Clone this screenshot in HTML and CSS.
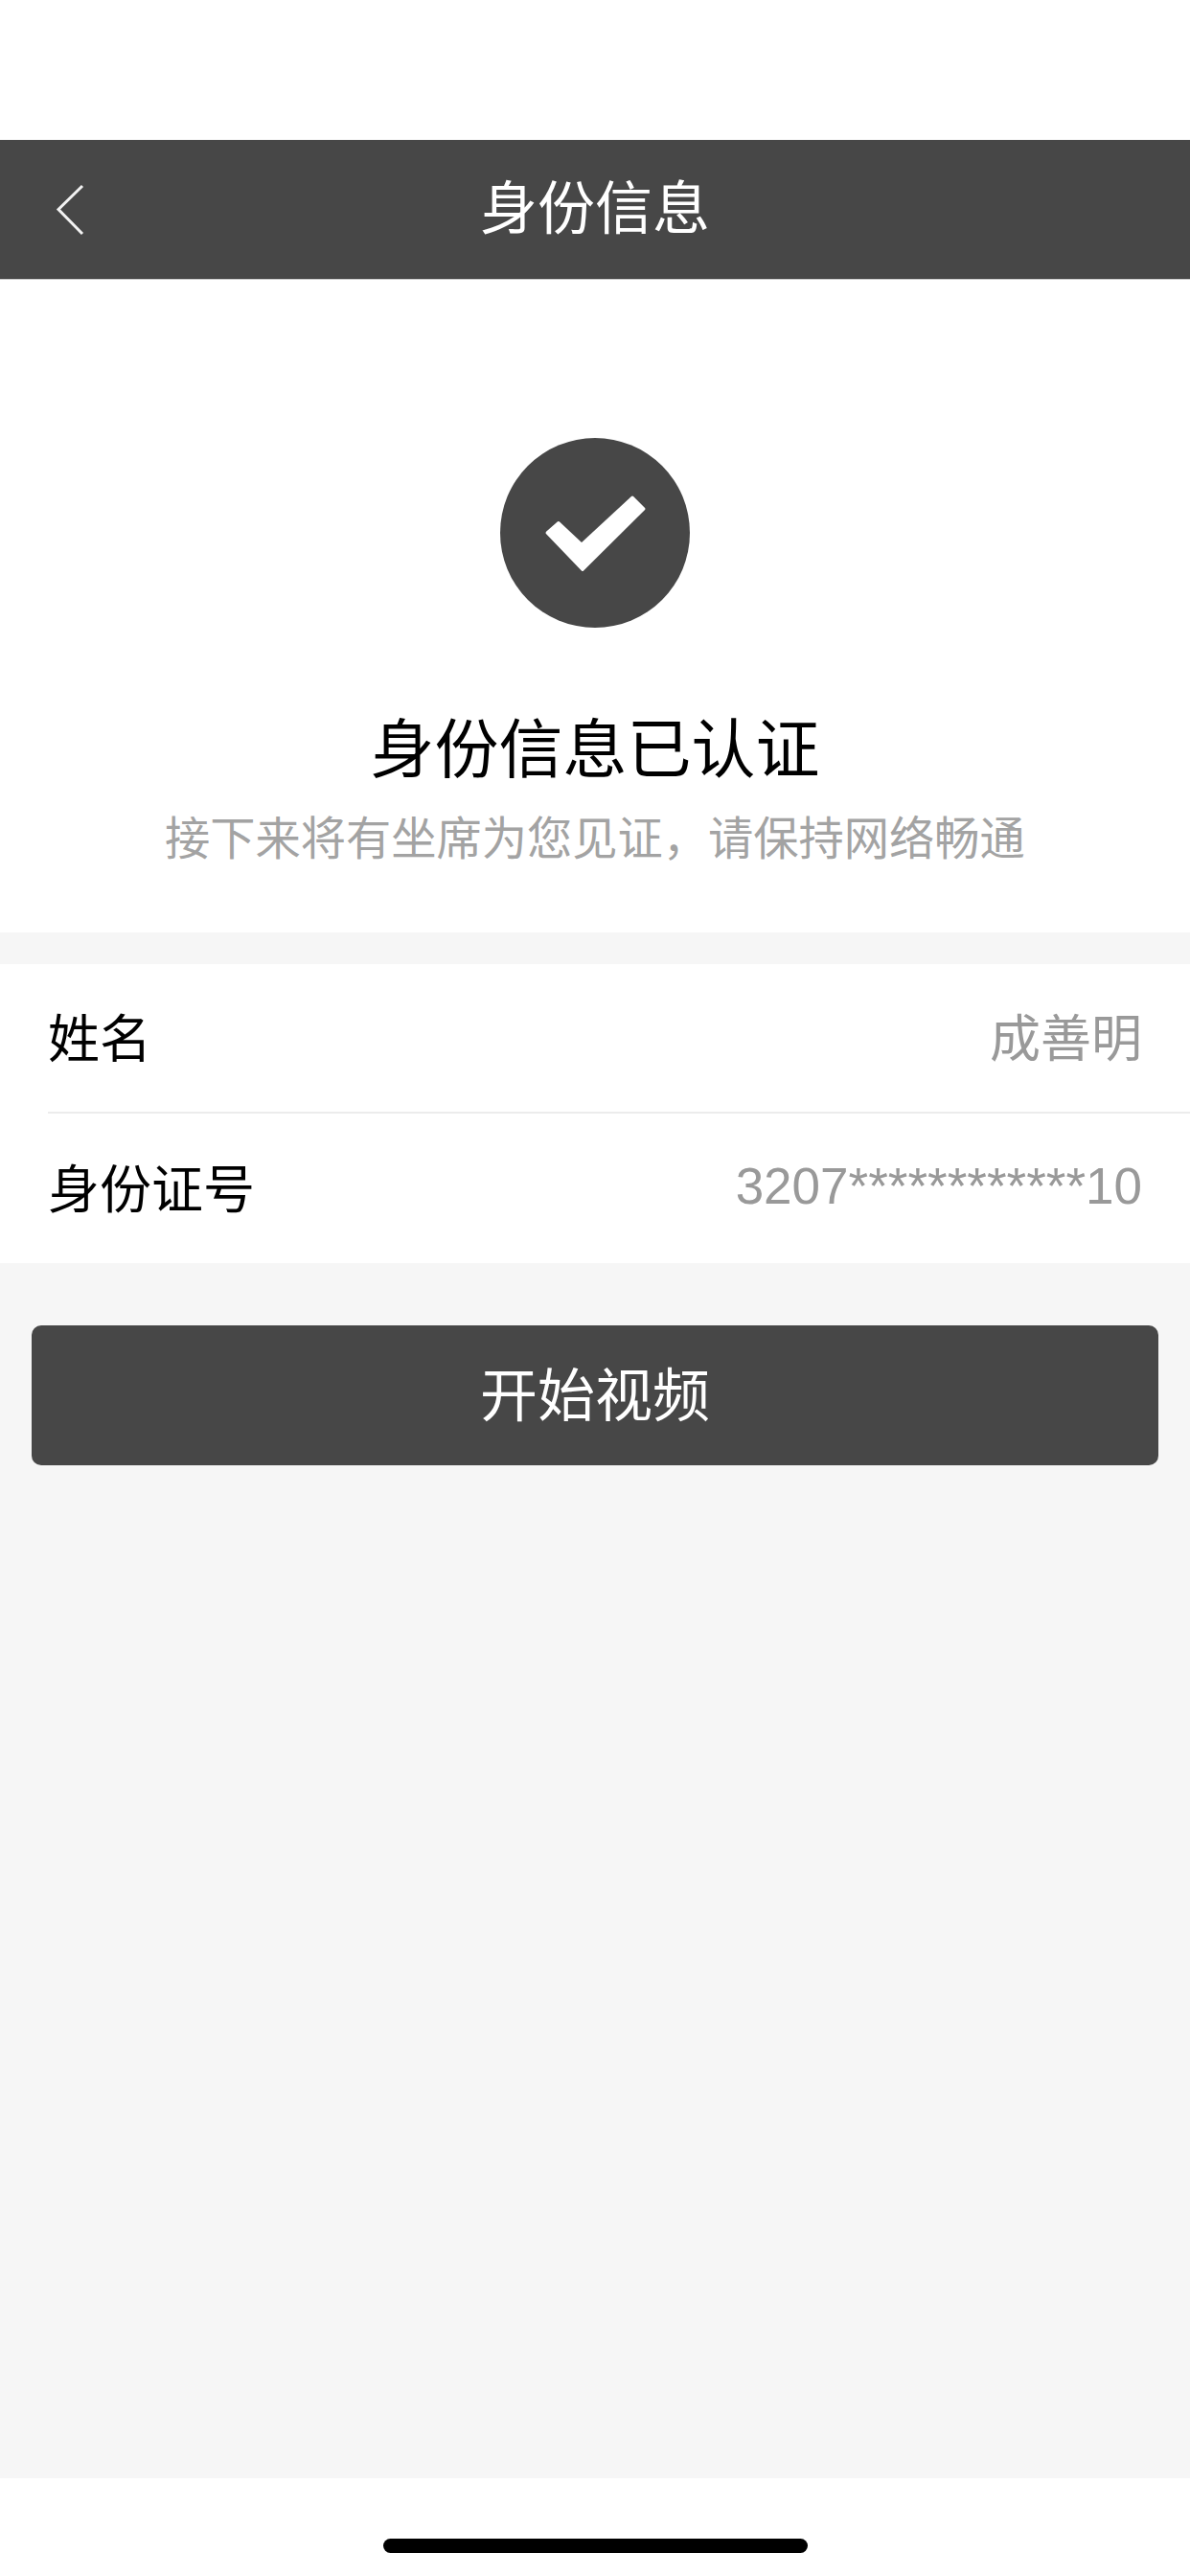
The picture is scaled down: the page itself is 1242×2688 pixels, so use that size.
FILE: index.html
```html
<!DOCTYPE html>
<html lang="zh-CN">

<head>
    <meta charset="UTF-8">
    <meta name="viewport" content="width=device-width, initial-scale=1.0">
    <title>身份信息</title>

    <link rel="stylesheet" href="styles.css">
</head>

<body>
    <div class="status-bar"></div>

    <header class="nav-bar">
        <a class="back-btn" href="#" aria-label="返回">
            <svg width="32" height="54" viewBox="0 0 32 54">
                <path d="M29 2 L4 26.5 L29 52" fill="none" stroke="#f2f2f2" stroke-width="3" />
            </svg>
        </a>
        <h1 class="nav-title">身份信息</h1>
    </header>

    <main class="content">
        <section class="result">
            <div class="result-icon">
                <svg width="198" height="198" viewBox="0 0 198 198">
                    <circle cx="99" cy="99" r="99" fill="#474747" />
                    <path d="M49 99 L61 88.5 L85 111 L138 62 L150 74 L86 137.5 Z" fill="#fff" stroke="#fff" stroke-width="3" stroke-linejoin="round" />
                </svg>
            </div>
            <h2 class="result-title">身份信息已认证</h2>
            <p class="result-desc">接下来将有坐席为您见证，请保持网络畅通</p>
        </section>

        <ul class="info-list">
            <li class="info-row">
                <span class="info-label">姓名</span>
                <span class="info-value">成善明</span>
            </li>
            <li class="info-row">
                <span class="info-label">身份证号</span>
                <span class="info-value">3207************10</span>
            </li>
        </ul>

        <button class="start-btn">开始视频</button>
    </main>

    <div class="home-bar">
        <div class="home-indicator"></div>
    </div>
</body>

</html>
```

FILE: styles.css
```css
* {
    box-sizing: border-box;
}

body {
    display: flex;
    flex-direction: column;
    width: 1242px;
    height: 2688px;
    margin: 0;
    font-family: "Liberation Sans", "Noto Sans CJK SC", sans-serif;
    color: #000;
    background: #fff;
}

.status-bar {
    height: 146px;
}

.nav-bar {
    display: grid;
    grid-template-columns: 1fr auto 1fr;
    align-items: center;
    height: 146px;
    padding-left: 57px;
    padding-right: 57px;
    background: #474747;
    border-bottom: 1px solid #ccc;
}

.back-btn {
    display: flex;
}

.nav-title {
    margin: 0;
    font-size: 60px;
    font-weight: 400;
    line-height: 80px;
    color: #fff;
}

.content {
    flex: 1;
    display: flex;
    flex-direction: column;
    background: #f6f6f6;
}

.result {
    display: flex;
    flex-direction: column;
    align-items: center;
    height: 681px;
    padding-top: 165px;
    background: #fff;
}

.result-icon {
    display: flex;
}

.result-title {
    margin: 83px 0 0;
    font-size: 67px;
    font-weight: 400;
    line-height: 90px;
}

.result-desc {
    margin: 13px 0 0;
    font-size: 47.25px;
    line-height: 70px;
    color: #a3a3a3;
}

.info-list {
    margin: 33px 0 0;
    padding: 0;
    list-style: none;
    background: #fff;
}

.info-row {
    display: flex;
    justify-content: space-between;
    align-items: center;
    height: 156px;
    margin-left: 50px;
    padding-right: 50px;
    padding-bottom: 6px;
    border-bottom: 2px solid #ececec;
}

.info-row:last-child {
    border-bottom: 0;
}

.info-label {
    font-size: 54px;
}

.info-value {
    font-size: 53px;
    color: #999;
}

.start-btn {
    height: 146px;
    margin: 65px 33px 0;
    padding-bottom: 10px;
    border: 0;
    border-radius: 10px;
    font-family: inherit;
    font-size: 60px;
    color: #fff;
    background: #474747;
}

.home-bar {
    display: flex;
    justify-content: center;
    height: 102px;
    padding-top: 63px;
    background: #fff;
}

.home-indicator {
    width: 443px;
    height: 15px;
    border-radius: 8px;
    background: #000;
}
```
